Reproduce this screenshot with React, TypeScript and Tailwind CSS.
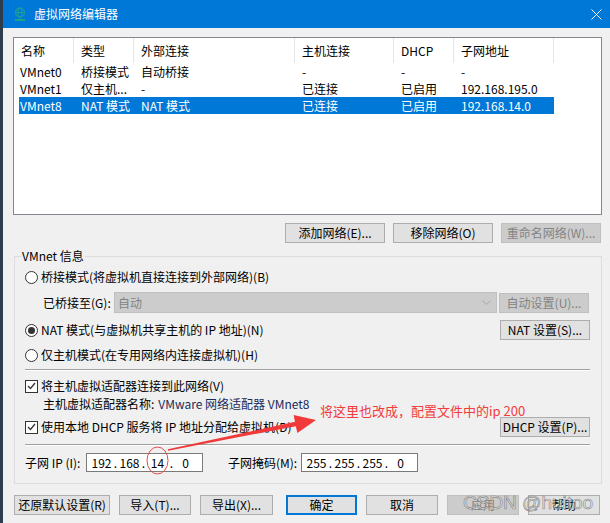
import React from 'react';

type BtnProps = {
  label: string;
  w: string;
  disabled?: boolean;
  primary?: boolean;
  className?: string;
};

function Btn({ label, w, disabled, primary, className = '' }: BtnProps) {
  const tone = disabled
    ? 'bg-[#cccccc] border-[#bfbfbf] text-[#838383]'
    : primary
      ? 'bg-[#e1e1e1] border-2 border-[#0078d7] text-black'
      : 'bg-[#e1e1e1] border-[#adadad] text-black';
  return (
    <div className={`${w} h-[20px] shrink-0 border flex items-center justify-center text-[12px] leading-[16px] ${tone} ${className}`}>
      {label}
    </div>
  );
}

function Radio({ checked }: { checked?: boolean }) {
  return (
    <div className="w-[13px] h-[13px] shrink-0 rounded-full border border-[#333333] bg-white flex items-center justify-center">
      {checked && <div className="w-[7px] h-[7px] rounded-full bg-[#333333]" />}
    </div>
  );
}

function Check() {
  return (
    <div className="w-[13px] h-[13px] shrink-0 border border-[#333333] bg-white flex items-center justify-center">
      <svg width="9" height="8" viewBox="0 0 9 8">
        <path d="M1 4 L3.5 6.5 L8 1" fill="none" stroke="#333333" strokeWidth="1.3" />
      </svg>
    </div>
  );
}

// widths of the list columns
const cols = [60, 60, 161, 99, 60, 100];

const rows = [
  ['VMnet0', '桥接模式', '自动桥接', '-', '-', '-'],
  ['VMnet1', '仅主机...', '-', '已连接', '已启用', '192.168.195.0'],
  ['VMnet8', 'NAT 模式', 'NAT 模式', '已连接', '已启用', '192.168.14.0'],
];

function IpBox({ parts }: { parts: string[] }) {
  return (
    <div className="w-[117px] h-[19px] shrink-0 border border-[#7a7a7a] bg-white flex items-center pl-[3px] text-[12px] leading-[16px]">
      {parts.map((p, i) => (
        <React.Fragment key={i}>
          {i > 0 && <span className="w-[5px] text-center">.</span>}
          <span className="w-[23px] text-center">{p}</span>
        </React.Fragment>
      ))}
    </div>
  );
}

export default function App() {
  return (
    <div className="w-[610px] h-[523px] flex bg-[#2e3d4d] overflow-hidden relative [font-family:'Noto_Sans_CJK_SC','Noto_Sans',sans-serif] text-black">
      <div className="w-[3px] shrink-0" />
      <div className="flex-1 flex flex-col bg-[#f0f0f0]">
        {/* title bar */}
        <div className="h-[28px] shrink-0 bg-[#0078d7] flex items-center pl-[11px] pr-[8px]">
          <svg width="12" height="14" viewBox="0 0 12 14">
            <circle cx="6" cy="5.5" r="4.5" fill="none" stroke="#1d9f9a" strokeWidth="1.2" />
            <ellipse cx="6" cy="5.5" rx="2" ry="4.5" fill="none" stroke="#1d9f9a" strokeWidth="1" />
            <line x1="1.5" y1="5.5" x2="10.5" y2="5.5" stroke="#1d9f9a" strokeWidth="1" />
            <line x1="6" y1="10" x2="6" y2="12.5" stroke="#1d9f9a" strokeWidth="1.2" />
            <line x1="1" y1="13" x2="11" y2="13" stroke="#2fbf5a" strokeWidth="1.2" />
          </svg>
          <span className="ml-[8px] text-white text-[12px] leading-[16px]">虚拟网络编辑器</span>
          <svg className="ml-auto" width="11" height="11" viewBox="0 0 11 11">
            <path d="M0.5 0.5 L10.5 10.5 M10.5 0.5 L0.5 10.5" stroke="white" strokeWidth="1" />
          </svg>
        </div>

        <div className="pl-[10px] flex flex-col">
          {/* network list */}
          <div className="mt-[9px] w-[589px] h-[178px] border border-[#828790] bg-white text-[12px] leading-[16px]">
            <div className="h-[25px] flex">
              {['名称', '类型', '外部连接', '主机连接', 'DHCP', '子网地址'].map((h, i) => (
                <div
                  key={h}
                  style={{ width: cols[i] }}
                  className="h-full shrink-0 flex items-center pl-[7px] border-r border-[#e5e5e5]"
                >
                  {h}
                </div>
              ))}
            </div>
            {rows.map((r, ri) => {
              const sel = ri === 2;
              return (
                <div key={ri} className={`ml-[5px] w-[535px] h-[17px] flex items-center ${sel ? 'bg-[#0078d7] text-white' : ''}`}>
                  {r.map((c, ci) => (
                    <div
                      key={ci}
                      style={{ width: ci === 0 ? cols[0] - 5 : cols[ci] }}
                      className={`shrink-0 whitespace-nowrap ${ci === 0 ? 'pl-[1px]' : 'pl-[7px]'}`}
                    >
                      {c}
                    </div>
                  ))}
                </div>
              );
            })}
          </div>

          {/* list buttons */}
          <div className="mt-[8px] w-[589px] flex justify-end gap-[8px] pr-[1px]">
            <Btn label="添加网络(E)..." w="w-[100px]" />
            <Btn label="移除网络(O)" w="w-[100px]" />
            <Btn label="重命名网络(W)..." w="w-[100px]" disabled />
          </div>

          {/* VMnet info */}
          <fieldset className="mt-[5px] ml-[1px] w-[588px] border border-[#dcdcdc] text-[12px] leading-[16px]">
            <legend className="ml-[6px] px-[1px] h-[16px] leading-[16px]">VMnet 信息</legend>
            <div className="pl-[10px] pr-[11px] pb-[11px] flex flex-col">
              <div className="mt-[4px] h-[18px] flex items-center gap-[3px]">
                <Radio />
                <span>桥接模式(将虚拟机直接连接到外部网络)(B)</span>
              </div>
              <div className="mt-[6px] h-[21px] flex items-center pl-[18px]">
                <span className="w-[71px] shrink-0">已桥接至(G):</span>
                <div className="w-[383px] h-[21px] shrink-0 bg-[#cccccc] border border-[#bfbfbf] flex items-center pl-[3px] pr-[5px] text-[#838383]">
                  <span>自动</span>
                  <svg className="ml-auto" width="9" height="5" viewBox="0 0 9 5">
                    <path d="M0.5 0.5 L4.5 4.5 L8.5 0.5" fill="none" stroke="#a8a8a8" strokeWidth="1" />
                  </svg>
                </div>
                <Btn label="自动设置(U)..." w="w-[90px]" disabled className="ml-[2px]" />
              </div>
              <div className="mt-[7px] h-[20px] flex items-center gap-[3px]">
                <Radio checked />
                <span>NAT 模式(与虚拟机共享主机的 IP 地址)(N)</span>
                <Btn label="NAT 设置(S)..." w="w-[90px]" className="ml-auto" />
              </div>
              <div className="mt-[6px] h-[18px] flex items-center gap-[3px]">
                <Radio />
                <span>仅主机模式(在专用网络内连接虚拟机)(H)</span>
              </div>
              <div className="mt-[5px] h-[2px] border-t border-[#a0a0a0] border-b border-b-white" />
              <div className="mt-[6px] h-[18px] flex items-center gap-[3px]">
                <Check />
                <span>将主机虚拟适配器连接到此网络(V)</span>
              </div>
              <div className="h-[18px] flex items-center pl-[18px]">
                <span>主机虚拟适配器名称:</span>
                <span className="ml-[4px] text-[#1c2a5a]">VMware 网络适配器 VMnet8</span>
              </div>
              <div className="mt-[4px] h-[20px] flex items-center gap-[3px]">
                <Check />
                <span>使用本地 DHCP 服务将 IP 地址分配给虚拟机(D)</span>
                <Btn label="DHCP 设置(P)..." w="w-[90px]" className="ml-auto" />
              </div>
              <div className="mt-[7px] h-[2px] border-t border-[#a0a0a0] border-b border-b-white" />
              <div className="mt-[7px] h-[19px] flex items-center">
                <span className="w-[61px] shrink-0">子网 IP (I):</span>
                <IpBox parts={['192', '168', '14', '0']} />
                <span className="ml-[25px] w-[73px] shrink-0">子网掩码(M):</span>
                <IpBox parts={['255', '255', '255', '0']} />
              </div>
            </div>
          </fieldset>

          {/* dialog buttons */}
          <div className="mt-[11px] ml-[1px] flex gap-[9px]">
            <Btn label="还原默认设置(R)" w="w-[96px]" />
            <Btn label="导入(T)..." w="w-[72px]" />
            <Btn label="导出(X)..." w="w-[73px]" />
            <Btn label="确定" w="w-[71px]" primary className="ml-[4px]" />
            <Btn label="取消" w="w-[72px]" />
            <Btn label="应用" w="w-[72px]" disabled />
            <Btn label="帮助" w="w-[72px]" />
          </div>
        </div>
      </div>

      {/* red annotation drawn over the dialog */}
      <svg className="absolute left-0 top-0 pointer-events-none" width="610" height="523" viewBox="0 0 610 523">
        <ellipse cx="157.5" cy="460.5" rx="10.5" ry="13.5" fill="none" stroke="#e64a4a" strokeWidth="1" />
        <polygon
          points="167.9,449.3 295,421.8 293.6,415 316,420 297.4,433 295.8,426.2 168.1,450.7"
          fill="#f03a3a"
        />
      </svg>
      <div className="absolute left-[320px] top-[402px] text-[13px] leading-[18px] text-[#f23b3b] whitespace-nowrap">
        将这里也改成，配置文件中的ip 200
      </div>
      <div className="absolute left-[463px] top-[492px] text-[19px] leading-[22px] [font-family:'Liberation_Sans',sans-serif] text-[rgba(245,245,245,0.55)] [-webkit-text-stroke:0.7px_rgba(110,110,110,0.75)] whitespace-nowrap pointer-events-none">
        CSDN @huitoo
      </div>
    </div>
  );
}
